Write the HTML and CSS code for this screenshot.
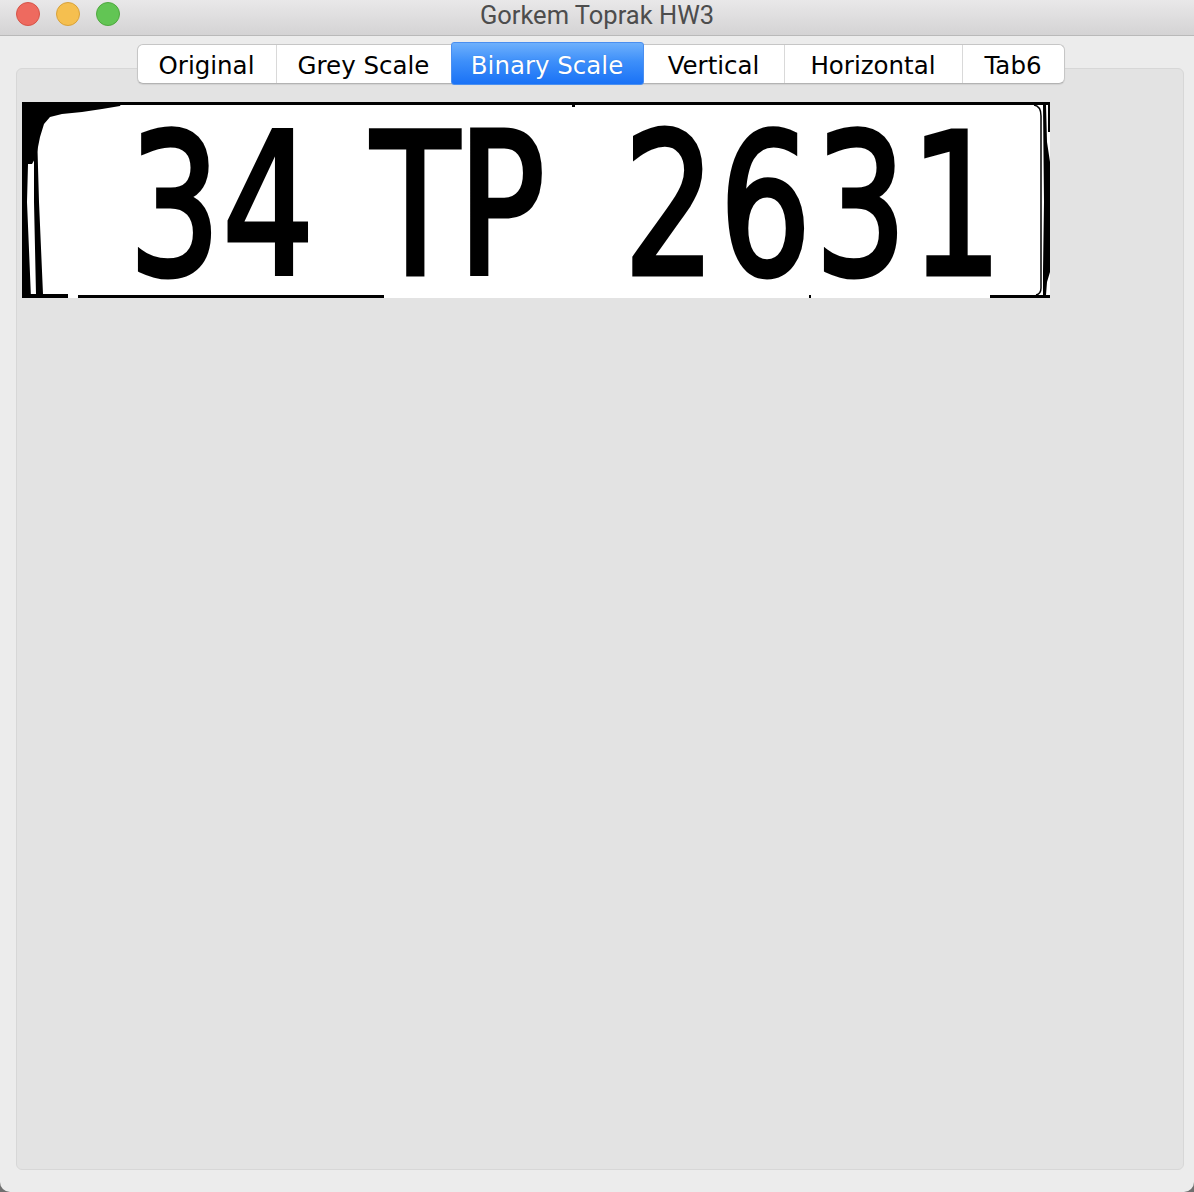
FILE: index.html
```html
<!DOCTYPE html>
<html lang="en">
<head>
<meta charset="utf-8">
<title>Gorkem Toprak HW3</title>
<link rel="stylesheet" href="styles.css">
</head>
<body>
<div class="window">
  <header class="titlebar">
    <div class="lights">
      <span class="light red"></span>
      <span class="light yellow"></span>
      <span class="light green"></span>
    </div>
    <div class="title">Gorkem Toprak HW3</div>
  </header>
  <main class="content">
    <nav class="tabs">
      <div class="strip">
        <div class="tab t1">Original</div>
        <div class="tab t2">Grey Scale</div>
        <div class="tab t3 selected">Binary Scale</div>
        <div class="tab t4">Vertical</div>
        <div class="tab t5">Horizontal</div>
        <div class="tab t6">Tab6</div>
      </div>
    </nav>
    <section class="panel">
      <div class="plate">
        <div class="plate-text"><span class="g1">34</span><span class="g2">TP</span><span class="g3">2631</span></div>
        <svg class="plate-noise" width="1028" height="196" viewBox="0 0 1028 196" aria-hidden="true">
          <rect x="0" y="0" width="1028" height="3" fill="#000"/>
          <polygon fill="#000" points="0,0 100,0 98,4 80,7 60,10 40,12 28,15 22,22 18,35 14,55 10,62 6,62 5,100 9,196 0,196"/>
          <polygon fill="#000" points="12,30 15,30 17,100 21,192 14,192 12,100"/>
          <rect x="0" y="192" width="46" height="4" fill="#000"/>
          <rect x="56" y="193" width="306" height="3" fill="#000"/>
          <rect x="968" y="193" width="60" height="3" fill="#000"/>
          <polygon fill="#000" points="1021,3 1024,3 1025,40 1028,60 1028,170 1025,180 1024,193 1021,193 1021,170 1022,100"/>
          <path d="M1012 3 Q1019 4 1019 14 L1019 186 Q1019 192 1014 193" fill="none" stroke="#000" stroke-width="1.5"/>
          <rect x="1026" y="0" width="2" height="30" fill="#000"/>
          <rect x="550" y="3" width="3" height="2" fill="#000"/>
          <rect x="787" y="193" width="2" height="3" fill="#000"/>
        </svg>
      </div>
    </section>
  </main>
</div>
</body>
</html>
```
FILE: styles.css
```css
html, body {
  margin: 0;
  padding: 0;
}

body {
  width: 1194px;
  height: 1192px;
  overflow: hidden;
  background: #6f6f6f;
}

.window {
  width: 1194px;
  height: 1192px;
  background: #ececec;
  border-radius: 0 0 10px 10px;
  display: flex;
  flex-direction: column;
  overflow: hidden;
}

.titlebar {
  position: relative;
  height: 35px;
  flex: none;
  border-bottom: 1px solid #b9b9b9;
  background: linear-gradient(#e9e8e9, #d4d3d4);
  display: flex;
  align-items: center;
  justify-content: center;
  box-sizing: content-box;
}

.lights {
  position: absolute;
  left: 16px;
  top: 2px;
  display: flex;
  gap: 16px;
}

.light {
  width: 24px;
  height: 24px;
  border-radius: 50%;
  box-sizing: border-box;
}

.red { background: #ee6a5f; border: 1px solid #d65448; }
.yellow { background: #f5bf4f; border: 1px solid #d8a23b; }
.green { background: #62c554; border: 1px solid #4fa83f; }

.title {
  font-family: Roboto, "Liberation Sans", sans-serif;
  font-size: 25.5px;
  color: #4d4d4d;
  margin-bottom: 5px;
}

.content {
  flex: 1;
  display: flex;
  flex-direction: column;
  padding: 0 10px 22px 16px;
  min-height: 0;
}

.tabs {
  position: relative;
  z-index: 1;
  display: flex;
  justify-content: center;
  margin: 8px 0 -16px;
  padding-left: 1px;
}

.strip {
  display: flex;
  height: 38px;
  border: 1px solid #c6c6c6;
  border-bottom-color: #b3b3b3;
  border-radius: 6px;
  background: #ffffff;
  box-shadow: 0 1px 1px rgba(0, 0, 0, 0.08);
}

.tab {
  box-sizing: border-box;
  display: flex;
  align-items: center;
  justify-content: center;
  font-family: "DejaVu Sans", Verdana, sans-serif;
  font-size: 24.5px;
  color: #000;
  border-left: 1px solid #d9d9d9;
  padding-top: 3px;
}

.t1 { width: 138px; border-left: 0; }
.t2 { width: 175px; }
.t3 { width: 193px; }
.t4 { width: 140px; border-left: 0; }
.t5 { width: 178px; }
.t6 { width: 102px; }

.tab.selected {
  margin: -3px 0 -2px;
  border: 1px solid #4a8ff0;
  border-radius: 3px;
  background: linear-gradient(#6eb0fc, #3d8ffa 45%, #1a72f6);
  color: #ffffff;
  text-shadow: 0 0 1px rgba(0, 40, 120, 0.35);
  padding-top: 4px;
}

.panel {
  flex: 1;
  min-height: 0;
  background: #e3e3e3;
  border: 1px solid #d7d7d7;
  border-radius: 6px;
  padding: 33px 0 0 5px;
}

.plate {
  position: relative;
  width: 1028px;
  height: 196px;
  background: #ffffff;
  display: flex;
  align-items: center;
}

.plate-text {
  display: flex;
  height: 150px;
  line-height: 150px;
  margin-top: 12px;
  padding-left: 107px;
  font-family: "DejaVu Sans Condensed", "DejaVu Sans", sans-serif;
  font-stretch: condensed;
  font-weight: normal;
  font-size: 160px;
  color: #000;
  -webkit-text-stroke: 4px #000;
  transform: scaleY(1.23);
  white-space: nowrap;
}

.g1 { letter-spacing: 2px; }
.g2 { margin-left: 55px; letter-spacing: -1px; }
.g3 { margin-left: 80px; letter-spacing: 4px; }

.plate-noise {
  position: absolute;
  left: 0;
  top: 0;
}
```
